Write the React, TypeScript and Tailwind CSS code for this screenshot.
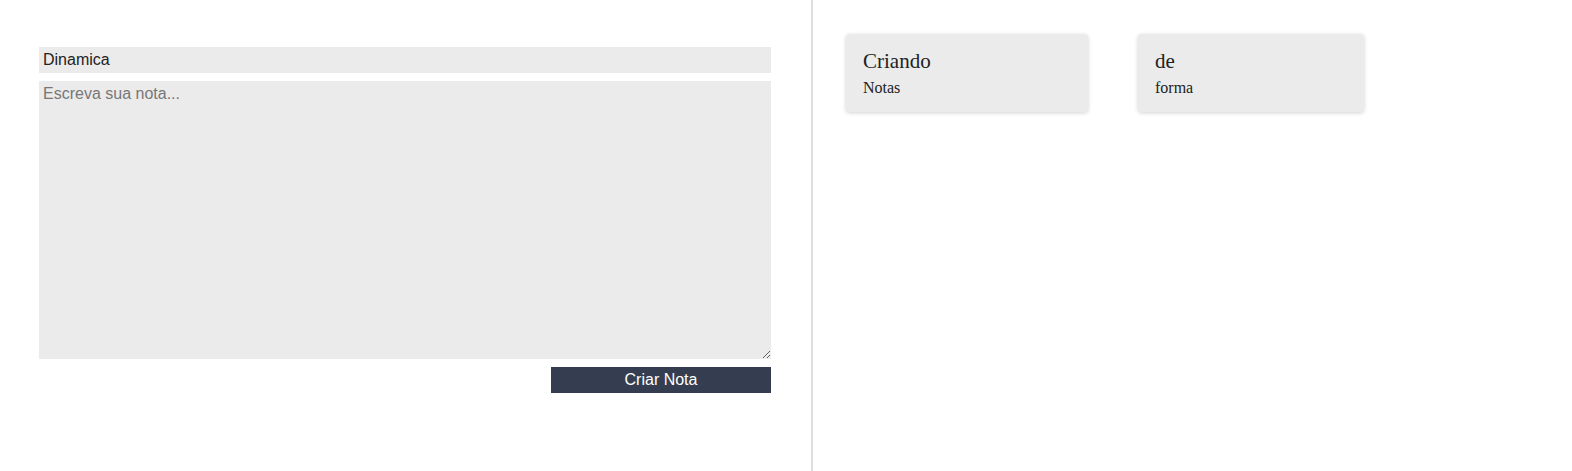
export default function App() {
  const notas = [
    { titulo: "Criando", texto: "Notas", w: "w-[242px]" },
    { titulo: "de", texto: "forma", w: "w-[226px]" },
  ];

  return (
    <div className="flex h-[471px] w-full bg-white">
      <div className="w-[813px] shrink-0 border-r-2 border-[#dedede] pl-[39px] pr-[40px] pt-[47px]" style={{ fontFamily: '"Liberation Sans", Arial, sans-serif' }}>
        <form className="flex flex-col gap-2" onSubmit={(e) => e.preventDefault()}>
          <input
            type="text"
            defaultValue="Dinamica"
            className="h-[26px] w-full bg-[#ebebeb] px-1 text-base text-[#222] outline-none"
          />
          <textarea
            placeholder="Escreva sua nota..."
            className="h-[278px] w-full bg-[#ebebeb] px-1 py-[1px] text-base text-[#222] placeholder:text-[#777] outline-none"
          />
          <div className="flex justify-end">
            <button
              type="submit"
              className="h-[26px] w-[220px] bg-[#353e50] text-base text-white"
            >
              Criar Nota
            </button>
          </div>
        </form>
      </div>

      <div className="flex flex-1 items-start gap-[50px] pl-[33px] pt-[34px]" style={{ fontFamily: '"Liberation Serif", "Times New Roman", serif' }}>
        {notas.map((n) => (
          <div
            key={n.titulo}
            className={`${n.w} h-[78px] rounded-[4px] bg-[#ebebeb] px-[17px] pt-[13px] shadow-[0_1px_4px_rgba(0,0,0,0.18)]`}
          >
            <h2 className="text-[21px] leading-[28px] text-[#222]">{n.titulo}</h2>
            <p className="text-base leading-[26px] text-[#222]">{n.texto}</p>
          </div>
        ))}
      </div>
    </div>
  );
}
